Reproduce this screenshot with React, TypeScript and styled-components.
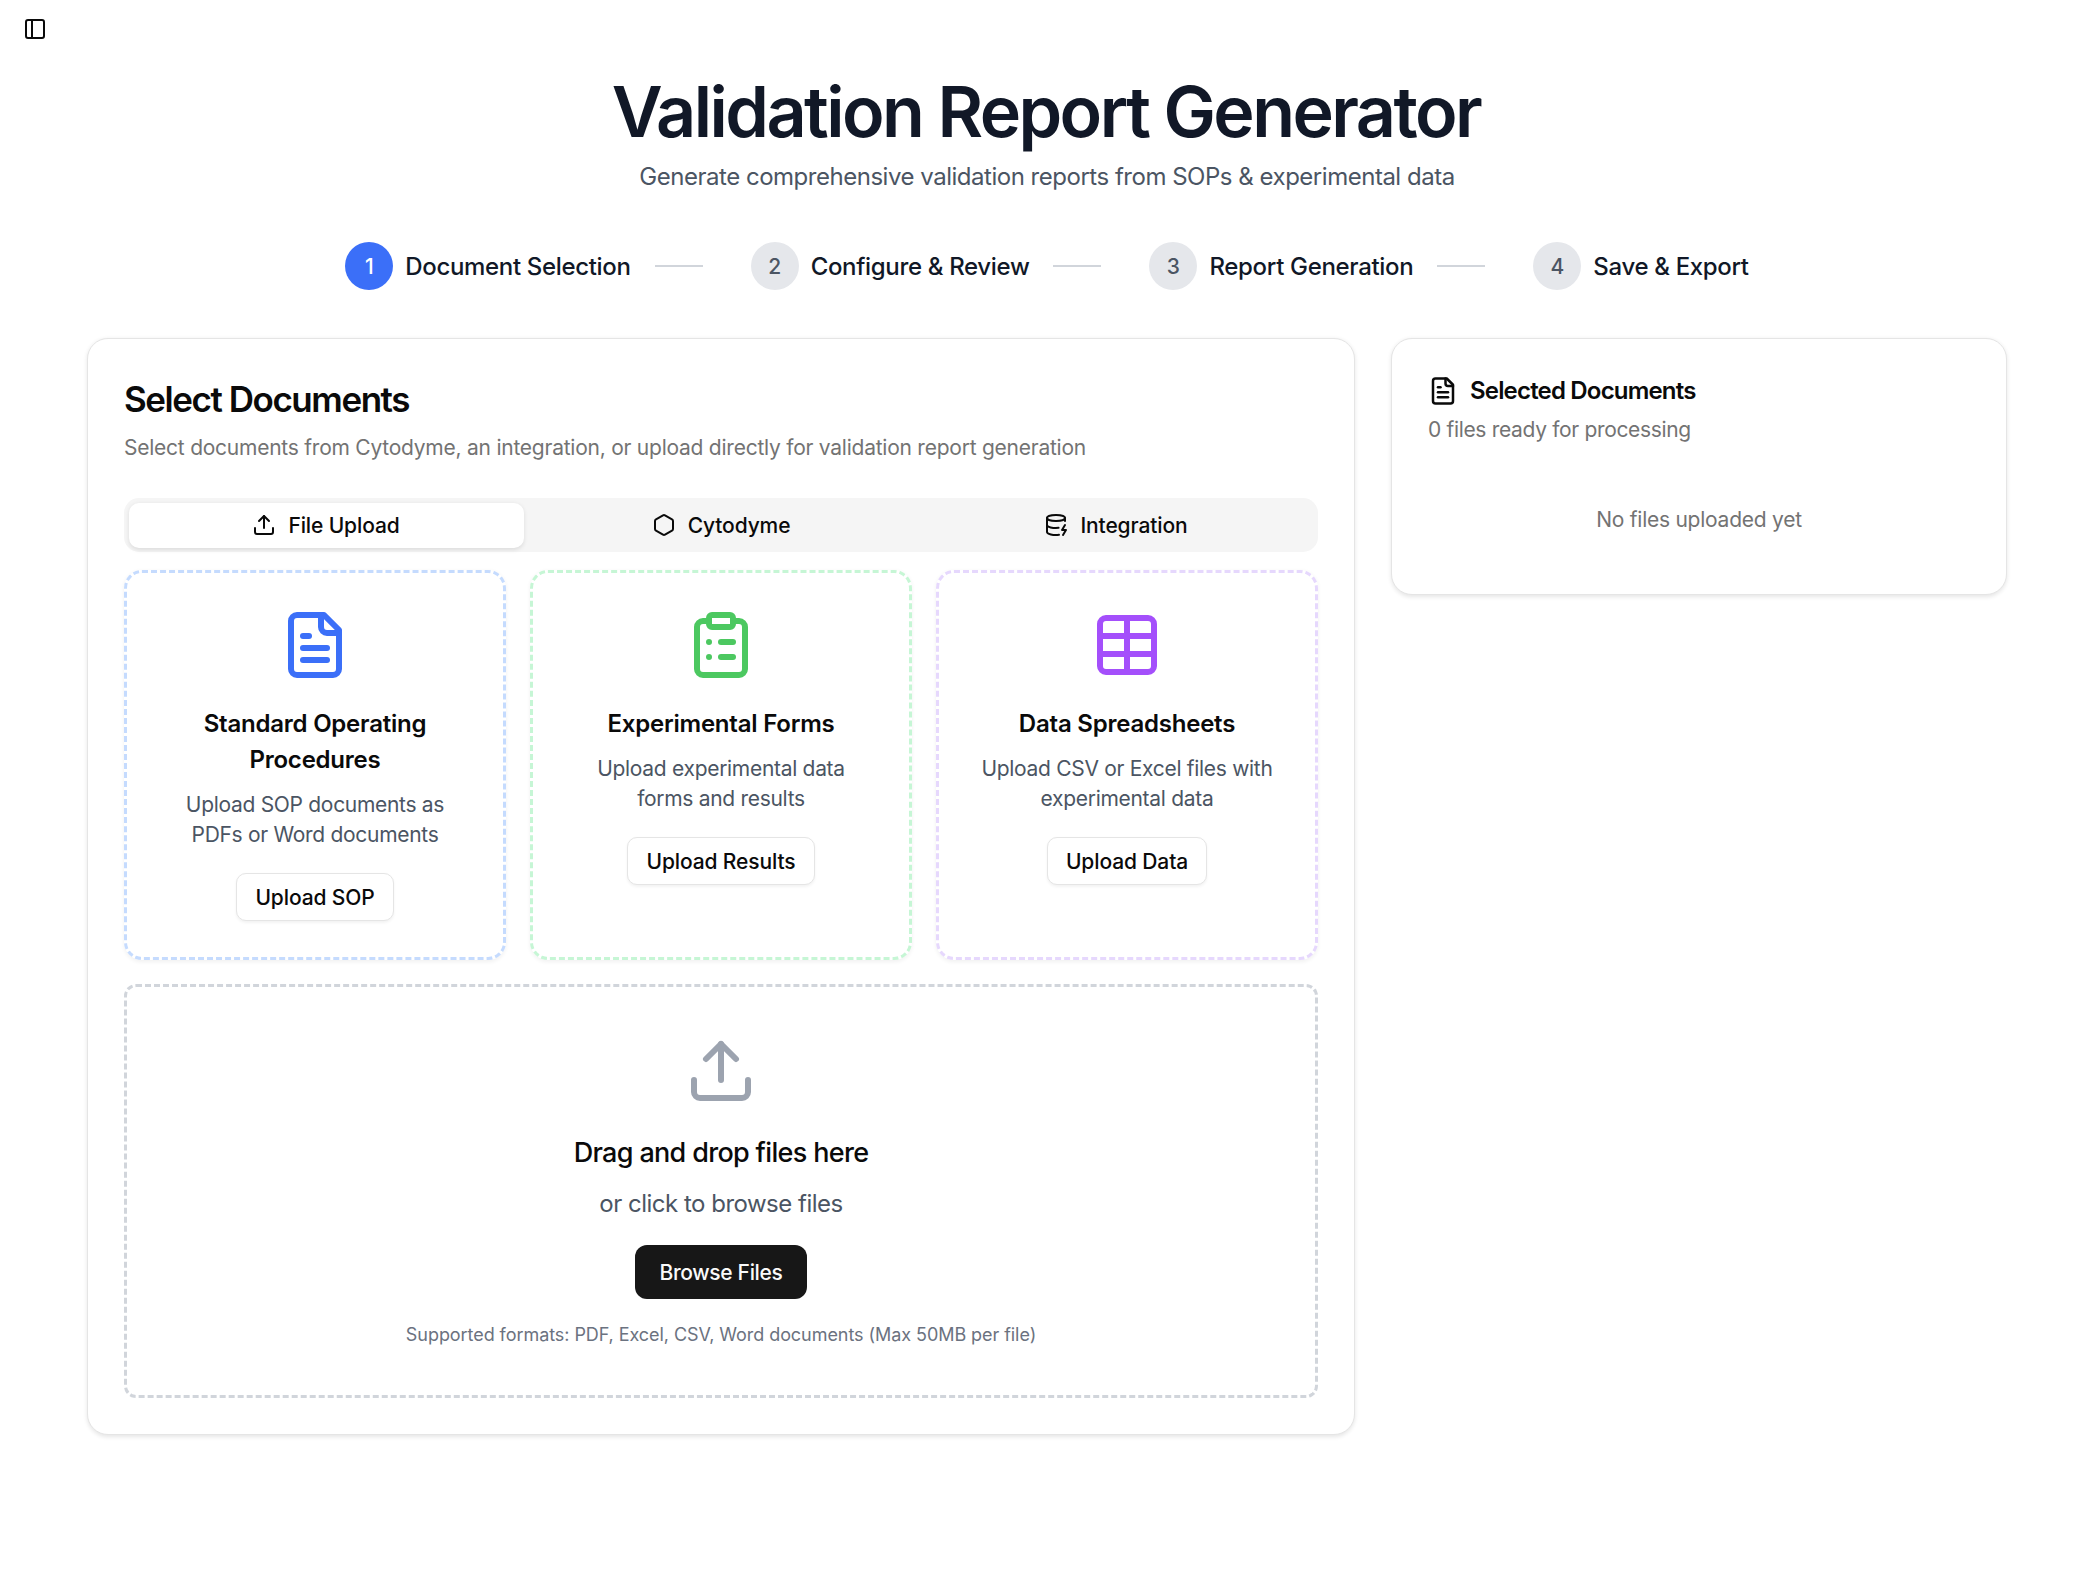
import React from 'react';
import styled, { createGlobalStyle } from 'styled-components';
import { PanelLeft, Upload, Hexagon, DatabaseZap, ClipboardList, Table } from 'lucide-react';

type FileIconProps = { size: number; color: string };

// lucide's older file-text shape, the current package draws a rounder corner
const FileIcon: React.FC<FileIconProps> = ({ size, color }) => (
    <svg width={size} height={size} viewBox="0 0 24 24" fill="none" stroke={color} strokeWidth="2" strokeLinecap="round" strokeLinejoin="round">
        <path d="M15 2H6a2 2 0 0 0-2 2v16a2 2 0 0 0 2 2h12a2 2 0 0 0 2-2V7Z" />
        <path d="M14 2v4a2 2 0 0 0 2 2h4" />
        <path d="M10 9H8" />
        <path d="M16 13H8" />
        <path d="M16 17H8" />
    </svg>
);

const steps = ['Document Selection', 'Configure & Review', 'Report Generation', 'Save & Export'];

const uploadKinds = [
    {
        title: 'Standard Operating Procedures',
        text: 'Upload SOP documents as PDFs or Word documents',
        button: 'Upload SOP',
        border: '#c5dbfe',
        icon: <FileIcon size={72} color="#3b6ff8" />,
    },
    {
        title: 'Experimental Forms',
        text: 'Upload experimental data forms and results',
        button: 'Upload Results',
        border: '#c6f6d5',
        icon: <ClipboardList size={72} color="#4cc860" />,
    },
    {
        title: 'Data Spreadsheets',
        text: 'Upload CSV or Excel files with experimental data',
        button: 'Upload Data',
        border: '#e6d8fd',
        icon: <Table size={72} color="#a44ffb" />,
    },
];

const App: React.FC = () => {
    return (
        <Page>
            <GlobalStyle />
            <TopBar>
                <PanelLeft size={24} color="#0a0a0a" />
            </TopBar>
            <Title>Validation Report Generator</Title>
            <Subtitle>Generate comprehensive validation reports from SOPs &amp; experimental data</Subtitle>

            <Stepper>
                {steps.map((step, index) => (
                    <Step key={step}>
                        <StepCircle $active={index === 0}>{index + 1}</StepCircle>
                        <StepLabel>{step}</StepLabel>
                        {index < steps.length - 1 && <StepLine />}
                    </Step>
                ))}
            </Stepper>

            <Columns>
                <MainCard>
                    <CardTitle>Select Documents</CardTitle>
                    <CardText>Select documents from Cytodyme, an integration, or upload directly for validation report generation</CardText>

                    <Tabs>
                        <Tab $active>
                            <Upload size={24} />
                            File Upload
                        </Tab>
                        <Tab>
                            <Hexagon size={24} />
                            Cytodyme
                        </Tab>
                        <Tab>
                            <DatabaseZap size={24} />
                            Integration
                        </Tab>
                    </Tabs>

                    <UploadGrid>
                        {uploadKinds.map((kind) => (
                            <UploadCard key={kind.button} $border={kind.border}>
                                <CardIconSlot>{kind.icon}</CardIconSlot>
                                <UploadTitle>{kind.title}</UploadTitle>
                                <UploadText>{kind.text}</UploadText>
                                <OutlineButton>{kind.button}</OutlineButton>
                            </UploadCard>
                        ))}
                    </UploadGrid>

                    <DropZone>
                        <CardIconSlot>
                            <Upload size={72} color="#9ca3af" />
                        </CardIconSlot>
                        <DropTitle>Drag and drop files here</DropTitle>
                        <DropText>or click to browse files</DropText>
                        <BrowseButton>Browse Files</BrowseButton>
                        <Formats>Supported formats: PDF, Excel, CSV, Word documents (Max 50MB per file)</Formats>
                    </DropZone>
                </MainCard>

                <SideCard>
                    <SideTitle>
                        <FileIcon size={30} color="#0a0a0a" />
                        Selected Documents
                    </SideTitle>
                    <SideText>0 files ready for processing</SideText>
                    <EmptyText>No files uploaded yet</EmptyText>
                </SideCard>
            </Columns>
        </Page>
    );
};

export default App;

const GlobalStyle = createGlobalStyle`
    html, body {
        margin: 0;
        padding: 0;
        background: #ffffff;
    }
    body {
        font-family: Inter, "Liberation Sans", sans-serif;
        color: #0a0a0a;
    }
    * {
        box-sizing: border-box;
    }
`;

const Page = styled.div`
    min-height: 1574px;
    display: flex;
    flex-direction: column;
    align-items: center;
`;

const TopBar = styled.div`
    width: 100%;
    height: 75px;
    padding: 17px 23px;
    color: #0a0a0a;
`;

const Title = styled.h1`
    margin: 0;
    padding: 1px 2px 0 0;
    font-size: 70px;
    line-height: 72px;
    font-weight: 600;
    letter-spacing: -2.55px;
    color: #111827;
`;

const Subtitle = styled.p`
    margin: 11px 0 0;
    font-size: 24px;
    line-height: 36px;
    letter-spacing: -0.48px;
    color: #4b5563;
`;

const Stepper = styled.div`
    display: flex;
    align-items: center;
    justify-content: center;
    gap: 48px;
    margin-top: 47px;
`;

const Step = styled.div`
    display: flex;
    align-items: center;
`;

const StepCircle = styled.div<{ $active?: boolean }>`
    width: 48px;
    height: 48px;
    border-radius: 50%;
    display: flex;
    align-items: center;
    justify-content: center;
    font-size: 21px;
    font-weight: 500;
    background: ${(p) => (p.$active ? '#3b6ff8' : '#e5e7eb')};
    color: ${(p) => (p.$active ? '#ffffff' : '#4b5563')};
`;

const StepLabel = styled.span`
    margin-left: 12px;
    padding-top: 2px;
    font-size: 24px;
    line-height: 36px;
    font-weight: 500;
    letter-spacing: -0.33px;
    color: #111827;
`;

const StepLine = styled.div`
    width: 48px;
    height: 2px;
    margin-left: 24px;
    background: #d1d5db;
`;

const Columns = styled.div`
    width: 1920px;
    margin-top: 48px;
    display: grid;
    grid-template-columns: 1268px 616px;
    gap: 36px;
    align-items: start;
`;

const MainCard = styled.section`
    border: 1.5px solid #e5e5e5;
    border-radius: 21px;
    background: #ffffff;
    box-shadow: 0 1.5px 4px rgba(0, 0, 0, 0.1);
    padding: 36px;
`;

const CardTitle = styled.h2`
    margin: 0;
    font-size: 35px;
    line-height: 48px;
    font-weight: 600;
    letter-spacing: -1.45px;
`;

const CardText = styled.p`
    margin: 10px 0 0;
    font-size: 21px;
    line-height: 30px;
    letter-spacing: -0.24px;
    color: #737373;
`;

const Tabs = styled.div`
    margin-top: 35px;
    height: 54px;
    padding: 4.5px;
    display: grid;
    grid-template-columns: repeat(3, 1fr);
    background: #f5f5f5;
    border-radius: 15px;
`;

const Tab = styled.div<{ $active?: boolean }>`
    display: flex;
    align-items: center;
    justify-content: center;
    gap: 12px;
    font-size: 21px;
    font-weight: 500;
    letter-spacing: -0.12px;
    color: #0a0a0a;
    border-radius: 10px;
    background: ${(p) => (p.$active ? '#ffffff' : 'transparent')};
    box-shadow: ${(p) => (p.$active ? '0 1.5px 4px rgba(0, 0, 0, 0.1)' : 'none')};
`;

const UploadGrid = styled.div`
    margin-top: 18px;
    display: grid;
    grid-template-columns: repeat(3, 1fr);
    gap: 24px;
`;

const UploadCard = styled.div<{ $border: string }>`
    border: 3px dashed ${(p) => p.$border};
    border-radius: 18px;
    padding: 36px;
    display: flex;
    flex-direction: column;
    align-items: center;
    text-align: center;
    box-shadow: 0 1.5px 4px rgba(0, 0, 0, 0.06);
`;

const CardIconSlot = styled.div`
    height: 72px;
    margin-bottom: 25px;
`;

const UploadTitle = styled.h3`
    margin: 0 0 12px;
    font-size: 24px;
    line-height: 36px;
    font-weight: 600;
    letter-spacing: -0.22px;
`;

const UploadText = styled.p`
    margin: 0 0 23px;
    font-size: 21px;
    line-height: 30px;
    letter-spacing: -0.3px;
    color: #4b5563;
`;

const OutlineButton = styled.button`
    height: 48px;
    padding: 0 18px;
    border: 1.5px solid #e5e5e5;
    border-radius: 10px;
    background: #ffffff;
    box-shadow: 0 1.5px 3px rgba(0, 0, 0, 0.05);
    font-family: inherit;
    font-size: 21px;
    font-weight: 500;
    letter-spacing: -0.12px;
    color: #0a0a0a;
`;

const DropZone = styled.div`
    margin-top: 24px;
    border: 3px dashed #d1d5db;
    border-radius: 12px;
    padding: 48px;
    display: flex;
    flex-direction: column;
    align-items: center;
    text-align: center;
`;

const DropTitle = styled.h3`
    margin: 0;
    font-size: 27px;
    line-height: 42px;
    font-weight: 500;
    letter-spacing: -0.67px;
`;

const DropText = styled.p`
    margin: 12px 0 0;
    font-size: 24px;
    line-height: 36px;
    letter-spacing: -0.5px;
    color: #4b5563;
`;

const BrowseButton = styled.button`
    margin-top: 23px;
    height: 54px;
    padding: 0 24px;
    border: none;
    border-radius: 12px;
    background: #171717;
    font-family: inherit;
    font-size: 21px;
    font-weight: 500;
    letter-spacing: -0.33px;
    color: #fafafa;
`;

const Formats = styled.p`
    margin: 24px 0 0;
    font-size: 18px;
    line-height: 24px;
    letter-spacing: -0.06px;
    color: #6b7280;
`;

const SideCard = styled.aside`
    border: 1.5px solid #e5e5e5;
    border-radius: 21px;
    background: #ffffff;
    box-shadow: 0 1.5px 4px rgba(0, 0, 0, 0.1);
    padding: 37px 36px 35px;
`;

const SideTitle = styled.h2`
    margin: 0;
    display: flex;
    align-items: center;
    gap: 12px;
    font-size: 24px;
    line-height: 30px;
    font-weight: 600;
    letter-spacing: -0.82px;
`;

const SideText = styled.p`
    margin: 9px 0 0;
    font-size: 21px;
    line-height: 30px;
    letter-spacing: -0.33px;
    color: #737373;
`;

const EmptyText = styled.p`
    margin: 60px 0 24px;
    text-align: center;
    font-size: 21px;
    line-height: 30px;
    letter-spacing: -0.25px;
    color: #737373;
`;
